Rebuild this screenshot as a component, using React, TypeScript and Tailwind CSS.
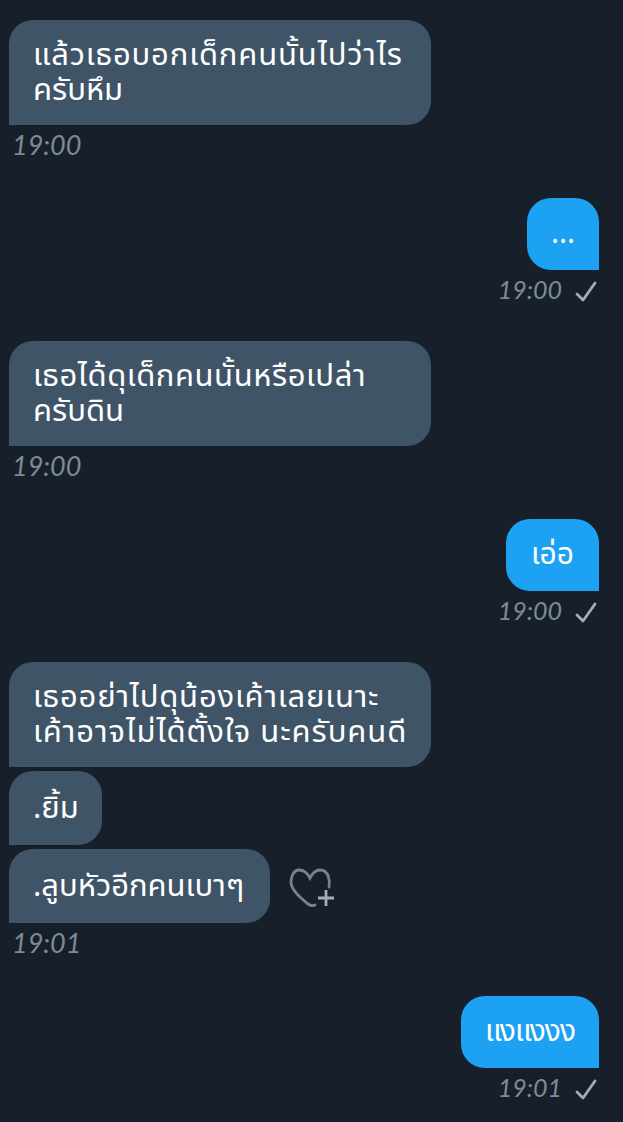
const thai = "font-['Noto_Sans','Noto_Sans_Thai','Liberation_Sans',sans-serif]";

function Time({ children, small }: { children: string; small?: boolean }) {
  return (
    <span className={`font-['Lato',sans-serif] italic leading-none text-[#7d8b97] ${small ? 'text-[25px]' : 'text-[27px]'}`}>
      {children}
    </span>
  );
}

function Left({ lines, h }: { lines: [string, string][]; h: string }) {
  return (
    <div className={`rounded-[24px] rounded-bl-none bg-[#3f5567] pl-6 pb-[4px] text-[31px] leading-[35px] text-white flex flex-col justify-center ${h} ${thai}`}>
      {lines.map(([l, track]) => (
        <div key={l} className={`whitespace-nowrap ${track}`}>{l}</div>
      ))}
    </div>
  );
}

function Right({ text, w, track }: { text: string; w: string; track: string }) {
  return (
    <div className="flex flex-col items-end">
      <div className={`h-[72px] ${w} rounded-[24px] rounded-br-none bg-[#1da1f2] pb-[5px] text-[30px] text-white flex items-center justify-center ${track} ${thai}`}>
        {text}
      </div>
    </div>
  );
}

function SentTime({ t }: { t: string }) {
  return (
    <div className="h-[31px] flex items-center justify-end gap-[13px] pr-[2px] pt-[8px]">
      <Time small>{t}</Time>
      <svg width="22" height="22" viewBox="0 0 22 22" fill="none" stroke="#a3adb5" strokeWidth="2.8" strokeLinecap="round" strokeLinejoin="round" className="mt-[5px]">
        <path d="M2 13 L8 19 L20 2" />
      </svg>
    </div>
  );
}

function ReceivedTime({ t }: { t: string }) {
  return (
    <div className="h-[42px] flex items-center pl-[3px] pb-[4px]">
      <Time>{t}</Time>
    </div>
  );
}

export default function App() {
  return (
    <div className="h-[1122px] overflow-hidden bg-[#17202a] pt-5 pl-[9px] pr-6">
      <div className="h-[178px]">
        <Left lines={[['แล้วเธอบอกเด็กคนนั้นไปว่าไร', 'tracking-[0.85px]'], ['ครับหึม', 'tracking-[0px]']]} h="h-[105px] w-[422px]" />
        <ReceivedTime t="19:00" />
      </div>
      <div className="h-[143px]">
        <Right text="..." w="w-[72px]" track="tracking-[0px]" />
        <SentTime t="19:00" />
      </div>
      <div className="h-[178px]">
        <Left lines={[['เธอได้ดุเด็กคนนั้นหรือเปล่า', 'tracking-[0.55px]'], ['ครับดิน', 'tracking-[0px]']]} h="h-[105px] w-[422px]" />
        <ReceivedTime t="19:00" />
      </div>
      <div className="h-[143px]">
        <Right text="เอ่อ" w="w-[93px]" track="tracking-[0px]" />
        <SentTime t="19:00" />
      </div>
      <div className="h-[334px]">
        <div className="flex flex-col gap-1">
          <Left lines={[['เธออย่าไปดุน้องเค้าเลยเนาะ', 'tracking-[0.8px]'], ['เค้าอาจไม่ได้ตั้งใจ นะครับคนดี', 'tracking-[0.95px]']]} h="h-[105px] w-[422px]" />
          <Left lines={[['.ยิ้ม', 'tracking-[0px]']]} h="h-[74px] w-[93px]" />
          <div className="flex items-center gap-[19px]">
            <Left lines={[['.ลูบหัวอีกคนเบาๆ', 'tracking-[0px]']]} h="h-[74px] w-[261px]" />
            <svg width="46" height="42" viewBox="0 0 46 42" fill="none" stroke="#75848f" strokeWidth="2.8" strokeLinecap="round" className="mt-[6px]">
              <path d="M40 19 C41 13 40 2 31 2 C26 2 23 6 21 10 C19 6 16 2 10 2 C5 2 2 8 2 14 C2 22 12 30 19 36 C22 38 24 38 26 37" />
              <path d="M37 22 V38 M29 30 H45" strokeLinecap="butt" stroke="#a3adb5" />
            </svg>
          </div>
        </div>
        <ReceivedTime t="19:01" />
      </div>
      <Right text="แงแงงง" w="w-[138px]" track="tracking-[-1px]" />
      <SentTime t="19:01" />
    </div>
  );
}
